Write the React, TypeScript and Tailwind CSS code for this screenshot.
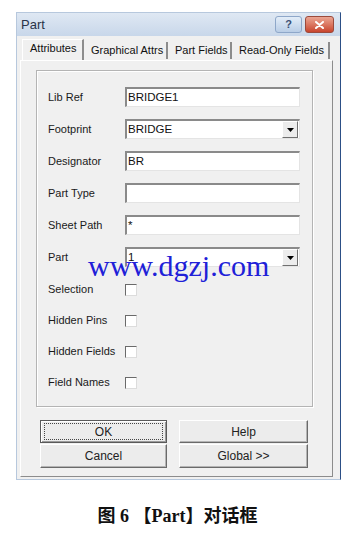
import React from 'react';

const sans = { fontFamily: '"Liberation Sans", Arial, sans-serif' };

const TextBox: React.FC<{ value?: string; dropdown?: boolean }> = ({ value = '', dropdown }) => (
    <div className="relative flex h-[20px] w-[175px] items-center border-t-2 border-l-2 border-b border-r border-t-[#8a8a8a] border-l-[#8a8a8a] border-b-[#e4e4e4] border-r-[#e4e4e4] bg-white pl-[1px] text-[11.5px] text-[#111]">
        <span className="leading-none">{value}</span>
        {dropdown && (
            <div className="absolute right-[1px] top-[0px] flex h-[17px] w-[16px] items-center justify-center border border-t-white border-l-white border-b-[#707070] border-r-[#707070] bg-[#ececec]">
                <svg width="7" height="4" viewBox="0 0 7 4">
                    <path d="M0 0h7L3.5 4z" fill="#000" />
                </svg>
            </div>
        )}
    </div>
);

const Checkbox: React.FC = () => (
    <div className="h-[12px] w-[12px] border-t border-l border-b border-r border-t-[#6a6a6a] border-l-[#6a6a6a] border-b-[#dcdcdc] border-r-[#dcdcdc] bg-white" />
);

const Button: React.FC<{ label: string; isDefault?: boolean; className?: string }> = ({ label, isDefault, className }) => (
    <div
        className={`flex h-[23px] items-center justify-center border bg-[#ececec] text-[12px] text-[#222] ${
            isDefault
                ? 'border-[#5a5a5a] shadow-[inset_1px_1px_0_#fff,inset_-1px_-1px_0_#9a9a9a]'
                : 'border-t-white border-l-white border-b-[#6a6a6a] border-r-[#6a6a6a] shadow-[inset_-1px_-1px_0_#b4b4b4]'
        } ${className ?? ''}`}
    >
        {isDefault ? (
            <div className="flex h-[17px] w-[calc(100%-6px)] items-center justify-center border border-dotted border-[#444]">
                {label}
            </div>
        ) : (
            label
        )}
    </div>
);

const fields: { label: string; value?: string; dropdown?: boolean }[] = [
    { label: 'Lib Ref', value: 'BRIDGE1' },
    { label: 'Footprint', value: 'BRIDGE', dropdown: true },
    { label: 'Designator', value: 'BR' },
    { label: 'Part Type' },
    { label: 'Sheet Path', value: '*' },
    { label: 'Part', value: '1', dropdown: true },
];

const checks = ['Selection', 'Hidden Pins', 'Hidden Fields', 'Field Names'];

const tabs = ['Attributes', 'Graphical Attrs', 'Part Fields', 'Read-Only Fields'];
const tabWidths = ['w-[62px]', 'w-[84px]', 'w-[64px]', 'w-[98px]'];

export default function App() {
    return (
        <div className="relative h-[534px] w-[355px] overflow-hidden bg-white pt-[12px]" style={sans}>
            {/* Dialog window */}
            <div className="ml-[16px] flex h-[468px] w-[325px] flex-col border border-[#b7c8dd] border-r-[#2c4f86] bg-[#f0f0f0]">
                {/* Title bar */}
                <div className="flex h-[23px] items-center justify-between bg-gradient-to-b from-[#dfe8f3] to-[#c8d7ea] pl-[4px] pr-[6px]">
                    <span className="text-[13px] text-[#2a3448]">Part</span>
                    <div className="flex gap-[3px]">
                        <div className="flex h-[17px] w-[27px] items-center justify-center rounded-[3px] border border-[#8ea7c9] bg-gradient-to-b from-[#e3edf8] to-[#b9cde6] text-[11px] font-bold text-[#3a4f75]">
                            ?
                        </div>
                        <div className="flex h-[17px] w-[29px] items-center justify-center rounded-[3px] border border-[#9b4a3c] bg-gradient-to-b from-[#eaa593] to-[#c8432c]">
                            <svg width="9" height="8" viewBox="0 0 9 8">
                                <path d="M1 1l7 6M8 1L1 7" stroke="#fff" strokeWidth="2" strokeLinecap="round" />
                            </svg>
                        </div>
                    </div>
                </div>

                {/* Tabs */}
                <div className="flex h-[24px] items-end pl-[5px] text-[11px] text-[#111]">
                    {tabs.map((t, i) => (
                        <div
                            key={t}
                            className={`flex ${tabWidths[i]} items-center border-r-2 border-[#8c8c8c] pl-[7px] ${
                                i === 0 ? 'h-[21px] border-t border-l border-t-white border-l-white pb-[3px]' : 'h-[17px] mb-[1px]'
                            }`}
                        >
                            {t}
                        </div>
                    ))}
                </div>

                {/* Tab panel */}
                <div className="ml-[3px] flex h-[417px] w-[313px] flex-col border border-t-white border-l-white border-b-[#8c8c8c] border-r-[#8c8c8c]">
                    {/* Group box */}
                    <div className="ml-[15px] mt-[9px] flex h-[337px] w-[277px] flex-col border border-[#b4b4b4] pl-[11px] pt-[16px] shadow-[inset_1px_1px_0_#fff,1px_1px_0_#fff]">
                        <div className="flex flex-col gap-[12px]">
                            {fields.map((f) => (
                                <div key={f.label} className="flex h-[20px] items-center">
                                    <span className="w-[77px] text-[11px] text-[#1a1a1a]">{f.label}</span>
                                    <TextBox value={f.value} dropdown={f.dropdown} />
                                </div>
                            ))}
                        </div>
                        <div className="mt-[7px] flex flex-col">
                            {checks.map((c) => (
                                <div key={c} className="flex h-[31px] items-center">
                                    <span className="w-[77px] text-[11px] text-[#1a1a1a]">{c}</span>
                                    <Checkbox />
                                </div>
                            ))}
                        </div>
                    </div>

                    {/* Buttons */}
                    <div className="ml-[19px] mt-[13px] grid w-[268px] grid-cols-[127px_129px] gap-x-[12px] gap-y-[1px]">
                        <Button label="OK" isDefault />
                        <Button label="Help" />
                        <Button label="Cancel" className="h-[24px]" />
                        <Button label="Global >>" className="h-[24px]" />
                    </div>
                </div>
            </div>

            {/* Caption */}
            <div
                className="mt-[23px] text-center text-[18px] font-bold text-[#111]"
                style={{ fontFamily: '"Liberation Serif", "Noto Sans CJK SC", serif' }}
            >
                图 6 【Part】对话框
            </div>

            {/* Watermark */}
            <div
                className="absolute left-[88px] top-[251px] text-[30px] leading-[30px] text-[#2020d8]"
                style={{ fontFamily: '"Liberation Serif", "Times New Roman", serif' }}
            >
                www.dgzj.com
            </div>
        </div>
    );
}
